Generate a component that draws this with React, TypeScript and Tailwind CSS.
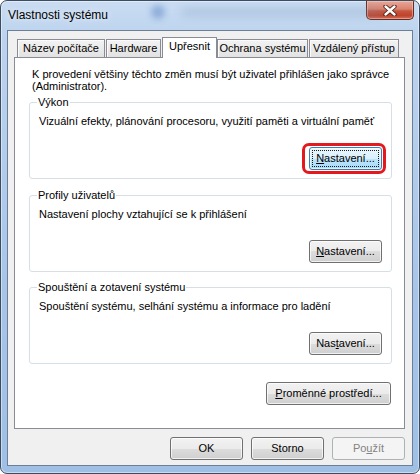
import type { ReactNode } from 'react';

const styles = {
  button:
    'relative flex h-[23px] w-[73px] items-center justify-center rounded-[3px] border text-[11px] leading-[13px]',
  normal:
    'border-[#707070] bg-[linear-gradient(to_bottom,#f2f2f2_0%,#ebebeb_50%,#dddddd_50%,#cfcfcf_100%)] text-black shadow-[inset_0_0_0_1px_rgba(255,255,255,0.7)]',
  focused:
    'border-[#3c7fb1] bg-[linear-gradient(to_bottom,#eaf6fd_0%,#d9f0fc_50%,#bee6fd_50%,#a7d9f5_100%)] text-black shadow-[inset_0_0_0_1px_rgba(255,255,255,0.6)]',
  disabled: 'border-[#adb2b5] bg-[#f4f4f4] text-[#838383]',
  tab: 'border border-b-0 border-[#898c95] text-center leading-[13px] whitespace-nowrap',
} as const;

type ButtonKind = 'normal' | 'focused' | 'disabled';

function DialogButton({
  kind = 'normal',
  className = '',
  children,
}: {
  kind?: ButtonKind;
  className?: string;
  children: ReactNode;
}) {
  return (
    <button type="button" className={`${styles.button} ${styles[kind]} ${className}`}>
      {kind === 'focused' && (
        <span className="pointer-events-none absolute inset-[2px] border border-dotted border-[#1a1a1a]" />
      )}
      <span className="whitespace-nowrap">{children}</span>
    </button>
  );
}

function GroupBox({
  title,
  description,
  className = '',
  children,
}: {
  title: string;
  description: string;
  className?: string;
  children: ReactNode;
}) {
  return (
    <div
      className={`relative w-[363px] rounded-[3px] border border-[#d5dfe5] pt-[12px] pr-[9px] pb-[8px] pl-[9px] ${className}`}
    >
      <span className="absolute -top-[7px] left-[7px] bg-white px-px leading-[13px]">{title}</span>
      <p className="leading-[13px] whitespace-nowrap">{description}</p>
      <div className="mt-[19px] flex justify-end">{children}</div>
    </div>
  );
}

const tabs = [
  { label: 'Název počítače', className: 'w-[88px]' },
  { label: 'Hardware', className: 'ml-px w-[55px]' },
  { label: 'Upřesnit', className: 'ml-px w-[55px]', active: true },
  { label: 'Ochrana systému', className: 'w-[91px]' },
  { label: 'Vzdálený přístup', className: 'ml-px w-[90px]' },
];

function CloseButton() {
  return (
    <div className="mr-[5px] flex h-[19px] w-[48px] items-center justify-center rounded-b-[5px] border border-t-0 border-[#6b2a20] bg-[linear-gradient(to_bottom,#e8a899_0%,#d9826f_45%,#c7563f_55%,#c0432b_80%,#d1705a_100%)] shadow-[inset_0_0_0_1px_rgba(255,220,210,0.45)]">
      <svg width="14" height="11" viewBox="0 0 14 11">
        <path d="M2.5 1.5 L11.5 9.5 M11.5 1.5 L2.5 9.5" stroke="#4a1e16" strokeWidth="4.2" strokeLinecap="round" />
        <path d="M2.5 1.5 L11.5 9.5 M11.5 1.5 L2.5 9.5" stroke="#ffffff" strokeWidth="2.4" strokeLinecap="round" />
      </svg>
    </div>
  );
}

export default function App() {
  return (
    <div className="h-[474px] w-[420px] overflow-hidden rounded-[7px] border border-[#3d4d61] bg-[linear-gradient(to_bottom,#c9dcf2_0%,#bcd3ee_8%,#a8c5e8_60%,#9fbfe4_100%)] font-['Liberation_Sans',Arial,sans-serif] text-[11px] text-black shadow-[inset_0_0_0_1px_rgba(255,255,255,0.45)]">
      {/* title bar */}
      <div className="relative flex h-[29px] items-start justify-between">
        <span className="absolute top-[4px] left-[150px] h-[14px] w-[14px] rounded-full bg-[#3f6fb8] opacity-40 blur-[3px]" />
        <span className="absolute top-[7px] left-[180px] h-[8px] w-[200px] rounded-full bg-[#7d98bb] opacity-30 blur-[4px]" />
        <span className="relative pt-[7px] pl-[7px] text-[12px] leading-[14px] text-black [text-shadow:0_0_6px_rgba(255,255,255,0.9)]">
          Vlastnosti systému
        </span>
        <CloseButton />
      </div>

      {/* client area */}
      <div className="mx-[6px] flex h-[436px] flex-col border border-[#6c7f96] bg-[#f0f0f0] pt-[6px]">
        <div className="flex h-[20px] items-end pl-[9px]">
          {tabs.map((tab) =>
            tab.active ? (
              <div
                key={tab.label}
                className={`${styles.tab} ${tab.className} relative z-10 -mb-px h-[21px] bg-white pt-[2px]`}
              >
                {tab.label}
              </div>
            ) : (
              <div
                key={tab.label}
                className={`${styles.tab} ${tab.className} h-[18px] bg-[linear-gradient(to_bottom,#f3f3f3,#e2e2e2)] pt-[2px] shadow-[inset_1px_1px_0_#fbfbfb]`}
              >
                {tab.label}
              </div>
            )
          )}
        </div>

        <div className="mr-[7px] ml-[6px] h-[372px] border border-[#898c95] bg-white">
          <p className="pt-[10px] pl-[17px] leading-[12px] whitespace-nowrap">
            K provedení většiny těchto změn musí být uživatel přihlášen jako správce
            <br />
            (Administrator).
          </p>

          <div className="ml-[14px] w-[363px]">
            <GroupBox
              title="Výkon"
              description="Vizuální efekty, plánování procesoru, využití paměti a virtuální paměť"
              className="mt-[10px]"
            >
              <div className="relative">
                <span className="pointer-events-none absolute -top-[4px] -right-[4px] -bottom-[4px] -left-[7px] rounded-[7px] border-[3px] border-[#e3191f]" />
                <DialogButton kind="focused">
                  <u>N</u>astavení...
                </DialogButton>
              </div>
            </GroupBox>

            <GroupBox
              title="Profily uživatelů"
              description="Nastavení plochy vztahující se k přihlášení"
              className="mt-[16px]"
            >
              <DialogButton>
                <u>N</u>astavení...
              </DialogButton>
            </GroupBox>

            <GroupBox
              title="Spouštění a zotavení systému"
              description="Spouštění systému, selhání systému a informace pro ladění"
              className="mt-[15px]"
            >
              <DialogButton>
                Nas<u>t</u>avení...
              </DialogButton>
            </GroupBox>

            <div className="mt-[18px] flex justify-end pr-px">
              <DialogButton className="w-[125px]">
                <u>P</u>roměnné prostředí...
              </DialogButton>
            </div>
          </div>
        </div>

        <div className="mt-[8px] flex justify-end gap-[8px] pr-[7px]">
          <DialogButton>OK</DialogButton>
          <DialogButton>Storno</DialogButton>
          <DialogButton kind="disabled">
            Po<u>u</u>žít
          </DialogButton>
        </div>
      </div>
    </div>
  );
}
